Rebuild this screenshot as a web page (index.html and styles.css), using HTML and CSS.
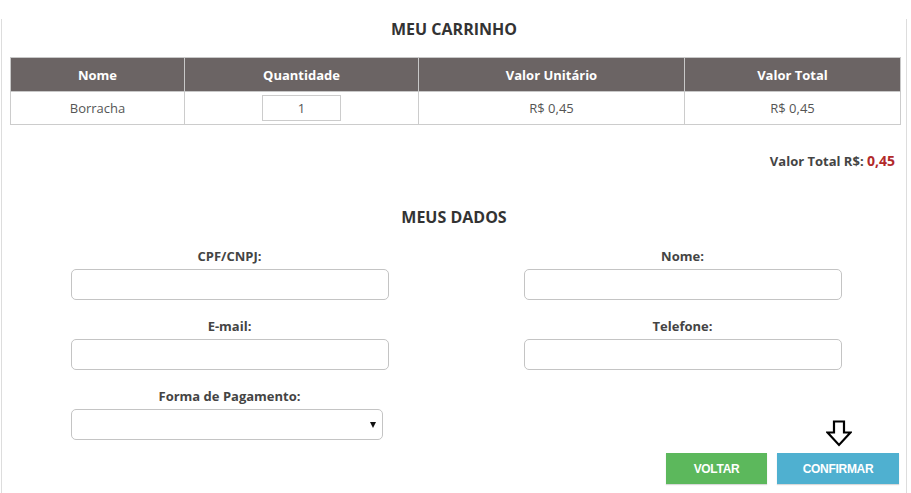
FILE: index.html
```html
<!DOCTYPE html>
<html lang="pt-BR">
<head>
  <meta charset="UTF-8" />
  <meta name="viewport" content="width=device-width, initial-scale=1.0"/>
  <title>Meu Carrinho</title>
  <link rel="stylesheet" href="styles.css">
</head>
<body>

  <div class="page">
    <h2 class="title">MEU CARRINHO</h2>

    <table class="cart">
      <thead>
        <tr>
          <th class="col-name">Nome</th>
          <th class="col-qty">Quantidade</th>
          <th class="col-unit">Valor Unitário</th>
          <th>Valor Total</th>
        </tr>
      </thead>
      <tbody>
        <tr>
          <td>Borracha</td>
          <td><input type="text" class="qty" value="1"></td>
          <td>R$ 0,45</td>
          <td>R$ 0,45</td>
        </tr>
      </tbody>
    </table>

    <p class="total">Valor Total R$: <span class="total-value">0,45</span></p>

    <h2 class="title title-data">MEUS DADOS</h2>

    <form class="data-form">
      <div class="field">
        <label for="cpf">CPF/CNPJ:</label>
        <input type="text" id="cpf">
      </div>
      <div class="field">
        <label for="nome">Nome:</label>
        <input type="text" id="nome">
      </div>
      <div class="field">
        <label for="email">E-mail:</label>
        <input type="email" id="email">
      </div>
      <div class="field">
        <label for="telefone">Telefone:</label>
        <input type="text" id="telefone">
      </div>
      <div class="field">
        <label for="pagamento">Forma de Pagamento:</label>
        <span class="select-wrap">
          <select id="pagamento">
            <option value=""></option>
          </select>
        </span>
      </div>
    </form>

    <div class="actions">
      <button type="button" class="btn btn-back">VOLTAR</button>
      <span class="confirm-wrap">
        <svg class="hint-arrow" width="26" height="27" viewBox="0 0 26 27">
          <path d="M8 1.5 H18 V12.5 H24.5 L13 25 L1.5 12.5 H8 Z" fill="none" stroke="#000" stroke-width="2.2" stroke-linejoin="miter"/>
        </svg>
        <button type="button" class="btn btn-confirm">CONFIRMAR</button>
      </span>
    </div>
  </div>

</body>
</html>
```

FILE: styles.css
```css
body {
  margin: 0;
  font-family: "Open Sans", Arial, sans-serif;
  color: #555;
  background: #fff;
}
.page {
  height: 493px;
  margin-left: 1px;
  border-left: 1px solid #ddd;
  border-right: 1px solid #ddd;
  box-sizing: content-box;
  padding: 0 8px;
  width: 888px;
}
.title {
  margin: 19px 0 18px;
  font-size: 16px;
  line-height: 20px;
  font-weight: 700;
  color: #333;
  text-align: center;
}
.cart {
  width: 891px;
  border-collapse: collapse;
  font-size: 13px;
}
.cart th, .cart td {
  border: 1px solid #ccc;
  text-align: center;
  padding: 0;
}
.cart th {
  height: 33px;
  background: #6b6464;
  color: #fff;
  font-weight: 700;
  border-color: #c8c8c8;
}
.cart td {
  height: 32px;
  color: #555;
}
.col-name { width: 173px; }
.col-qty { width: 233px; }
.col-unit { width: 265px; }
.qty {
  width: 79px;
  height: 26px;
  box-sizing: border-box;
  border: 1px solid #ccc;
  text-align: center;
  font-family: inherit;
  font-size: 13px;
  color: #555;
  padding: 0;
  vertical-align: middle;
}
.total {
  margin: 26px 3px 0 0;
  text-align: right;
  font-size: 13px;
  line-height: 20px;
  font-weight: 700;
  color: #444;
}
.total-value {
  color: #b22a2a;
  font-size: 14px;
}
.title-data {
  margin: 36px 0 0;
}
.data-form {
  display: grid;
  grid-template-columns: 1fr 1fr;
  row-gap: 17px;
  margin-top: 20px;
  margin-left: -7px;
  margin-right: -11px;
}
.field {
  display: flex;
  flex-direction: column;
  align-items: center;
}
.field label {
  font-size: 13px;
  line-height: 18px;
  font-weight: 700;
  color: #444;
  margin-bottom: 4px;
}
.field input, .field select {
  width: 318px;
  height: 31px;
  box-sizing: border-box;
  border: 1px solid #c4c4c4;
  border-radius: 5px;
  background: #fff;
  font-family: inherit;
}
.select-wrap {
  position: relative;
  display: block;
  margin-left: -6px;
}
.field select {
  width: 312px;
  appearance: none;
  -webkit-appearance: none;
}
.select-wrap::after {
  content: "";
  position: absolute;
  right: 7px;
  top: 13px;
  border-left: 3px solid transparent;
  border-right: 3px solid transparent;
  border-top: 6px solid #111;
}
.actions {
  display: flex;
  justify-content: flex-end;
  gap: 10px;
  margin-top: 13px;
  margin-right: -1px;
}
.confirm-wrap {
  position: relative;
  display: block;
}
.hint-arrow {
  position: absolute;
  left: 49px;
  top: -33px;
}
.btn {
  height: 31px;
  border: none;
  color: #fff;
  font-family: Arial, "Liberation Sans", sans-serif;
  font-size: 12px;
  font-weight: 700;
  letter-spacing: -0.3px;
  cursor: pointer;
  box-shadow: 0 1px 1px rgba(0, 0, 0, 0.15);
}
.btn-back {
  width: 101px;
  background: #5cb85c;
}
.btn-confirm {
  width: 122px;
  background: #4fb0d0;
}
```
